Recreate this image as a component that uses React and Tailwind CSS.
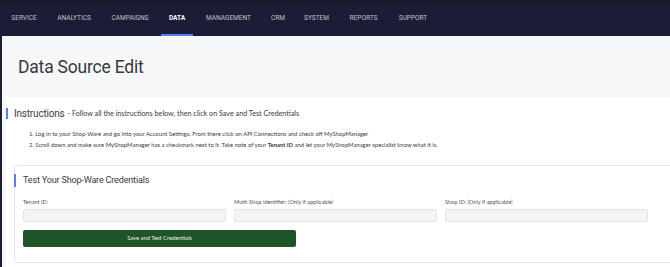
import React from "react";

const NAV = [
  { label: "SERVICE", w: "w-[26px]" },
  { label: "ANALYTICS", w: "w-[34px]" },
  { label: "CAMPAIGNS", w: "w-[38px]" },
  { label: "DATA", w: "w-[16px]", active: true },
  { label: "MANAGEMENT", w: "w-[47px]" },
  { label: "CRM", w: "w-[12px]" },
  { label: "SYSTEM", w: "w-[25px]" },
  { label: "REPORTS", w: "w-[29px]" },
  { label: "SUPPORT", w: "w-[30px]" },
];

const FIELDS = ["Tenant ID:", "Multi-Shop Identifier: (Only if applicable)", "Shop ID: (Only if applicable)"];

export default function App() {
  return (
    <div className="w-[670px] h-[267px] overflow-hidden bg-[#1a1d35] font-['Lato',sans-serif]">
      {/* Top nav */}
      <nav className="h-[36px] border-t-[3px] border-[#151829] flex items-stretch pl-[11px] gap-[20px] font-['Roboto',sans-serif]">
        {NAV.map((n) => (
          <div key={n.label} className={`relative ${n.w} flex items-center justify-center pb-[1px]`}>
            <span
              className={`whitespace-nowrap text-[6.6px] tracking-[-0.05px] ${
                n.active ? "text-white font-bold" : "text-[#bfc2cf] font-normal"
              }`}
            >
              {n.label}
            </span>
            {n.active && (
              <div className="absolute -left-[8px] -right-[8px] bottom-0 h-[2px] bg-[#5b7cf0]" />
            )}
          </div>
        ))}
      </nav>

      <div className="pl-[2px] h-[231px]">
        <main className="bg-[#f6f7f9] h-full">
          {/* Title */}
          <div className="h-[61px] flex items-center pl-[16px] pt-[2px]">
            <h1 className="text-[17.5px] text-[#38383c] tracking-[-0.2px] font-['Roboto',sans-serif] font-normal">
              Data Source Edit
            </h1>
          </div>

          {/* Panel */}
          <section className="ml-[4px] bg-white h-[170px] w-[700px] pt-[11px]">
            <div className="flex items-center h-[11px]">
              <div className="w-[2px] h-[11px] bg-[#5b7cf0]" />
              <span className="ml-[6px] text-[10px] text-[#3b3b3f] tracking-[-0.2px] font-['Roboto',sans-serif]">
                Instructions
              </span>
              <span className="ml-[3px] text-[7.2px] text-[#3b3b3f] pt-[1px]">
                - Follow all the instructions below, then click on Save and Test Credentials
              </span>
            </div>

            <ol className="mt-[9px] pl-[23px] text-[5.9px] text-[#3b3b3f]">
              <li className="h-[11px] leading-[11px] whitespace-nowrap">
                1. Log in to your Shop-Ware and go into your Account Settings. From there click on API Connections and check off MyShopManager
              </li>
              <li className="h-[11px] leading-[11px] whitespace-nowrap">
                2. Scroll down and make sure MyShopManager has a checkmark next to it. Take note of your{" "}
                <b className="font-bold">Tenant ID</b> and let your MyShopManager specialist know what it is.
              </li>
            </ol>

            {/* Credentials card */}
            <div className="ml-[8px] mt-[15px] h-[98px] border border-[#e6e7ea] rounded-[3px] pt-[8px]">
              <div className="flex items-center h-[13px]">
                <div className="-ml-[1px] w-[2px] h-[13px] bg-[#5b7cf0]" />
                <span className="ml-[7px] text-[9.1px] text-[#3b3b3f] tracking-[-0.2px] font-['Roboto',sans-serif]">
                  Test Your Shop-Ware Credentials
                </span>
              </div>

              <div className="mt-[11px] pl-[8px] flex gap-[8px]">
                {FIELDS.map((f) => (
                  <div key={f} className="w-[203px] flex flex-col">
                    <label className="text-[5.6px] text-[#555] leading-[8px]">{f}</label>
                    <div className="mt-[3px] h-[13px] bg-[#f3f4f6] border border-[#e3e4e8] rounded-[2px]" />
                  </div>
                ))}
              </div>

              <button className="ml-[8px] mt-[8px] w-[273px] h-[17px] bg-[#1d5527] rounded-[2px] text-[5.8px] text-[#e8efe9] flex items-center justify-center">
                Save and Test Credentials
              </button>
            </div>
          </section>
        </main>
      </div>
    </div>
  );
}
